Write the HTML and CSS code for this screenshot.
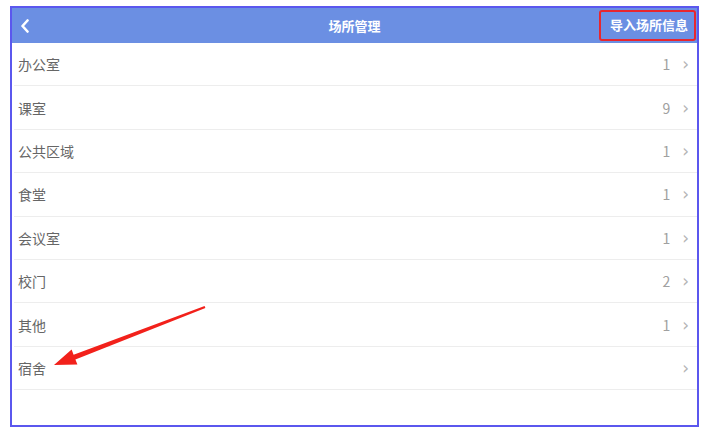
FILE: index.html
```html
<!DOCTYPE html>
<html lang="zh">
<head>
  <meta charset="UTF-8">
  <title>场所管理</title>
  <link rel="stylesheet" href="styles.css">
</head>
<body>
  <div class="frame">
    <header class="bar">
      <span class="back">
        <svg width="10" height="14" viewBox="0 0 10 14"><path d="M7.5 1.5 L2.5 7 L7.5 12.5" fill="none" stroke="#fff" stroke-width="2.6" stroke-linecap="round" stroke-linejoin="round"/></svg>
      </span>
      <h1>场所管理</h1>
      <span class="import">导入场所信息</span>
    </header>
    <ul class="list">
      <li><span class="name">办公室</span><span class="count">1</span><span class="arrow">›</span></li>
      <li><span class="name">课室</span><span class="count">9</span><span class="arrow">›</span></li>
      <li><span class="name">公共区域</span><span class="count">1</span><span class="arrow">›</span></li>
      <li><span class="name">食堂</span><span class="count">1</span><span class="arrow">›</span></li>
      <li><span class="name">会议室</span><span class="count">1</span><span class="arrow">›</span></li>
      <li><span class="name">校门</span><span class="count">2</span><span class="arrow">›</span></li>
      <li><span class="name">其他</span><span class="count">1</span><span class="arrow">›</span></li>
      <li><span class="name">宿舍</span><span class="count"></span><span class="arrow">›</span></li>
    </ul>
    <svg class="pointer" width="220" height="80" viewBox="0 0 220 80">
      <path d="M42 63 L59.6 47.6 L61.6 52.8 L192.6 4.1 L193.4 5.9 L63.4 57.4 L65.4 62.6 Z" fill="#f2211b"/>
    </svg>
  </div>
</body>
</html>
```

FILE: styles.css
```css
* {
  margin: 0;
  padding: 0;
  box-sizing: border-box;
}

body {
  padding: 6px 0 0 10px;
  background-color: #fff;
  font-family: "Noto Sans CJK SC", "Liberation Sans", sans-serif;
}

.frame {
  position: relative;
  width: 689px;
  height: 421px;
  border: 2px solid #5b57ee;
  background-color: #fff;
}

.bar {
  height: 35px;
  background-color: #6b8fe3;
  display: flex;
  align-items: center;
  justify-content: space-between;
  padding: 0 1px 0 8px;
}

.bar h1 {
  color: #fff;
  font-size: 13px;
  font-weight: bold;
  position: absolute;
  left: 0;
  right: 0;
  top: 8px;
  text-align: center;
  pointer-events: none;
}

.back {
  display: flex;
  align-items: center;
  height: 14px;
}

.import {
  color: #fff;
  font-size: 13px;
  font-weight: bold;
  padding: 3px 6px 4px 9px;
  border: 2px solid #e8262e;
  border-radius: 3px;
  line-height: 20px;
}

.list {
  list-style: none;
}

.list li {
  height: 43.4px;
  display: flex;
  align-items: center;
  border-bottom: 1px solid #ededed;
  margin-left: 2px;
  padding: 0 8px 0 4px;
}

.name {
  flex: 1;
  color: #666;
  font-size: 14px;
}

.count {
  color: #a0a0a0;
  font-size: 14px;
  margin-right: 12px;
}

.arrow {
  color: #b5b5b5;
  font-size: 17px;
  font-family: "DejaVu Sans", sans-serif;
  line-height: 1;
  margin-top: 1px;
}

.pointer {
  position: absolute;
  left: 0;
  top: 294px;
}
```
